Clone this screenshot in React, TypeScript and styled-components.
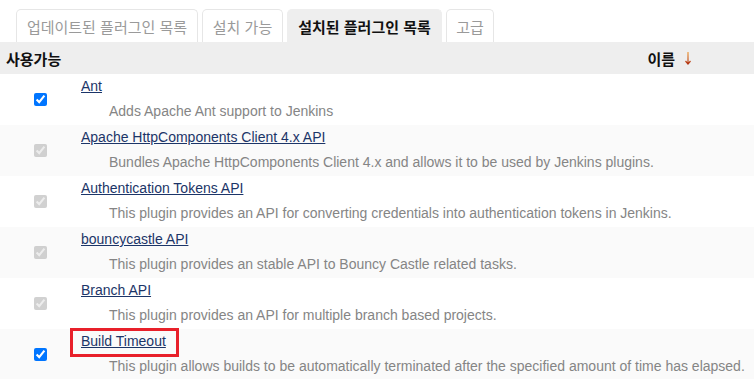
import React from 'react'
import styled, { createGlobalStyle } from 'styled-components'

const GlobalStyle = createGlobalStyle`
    body {
        margin: 0;
        background: #fff;
        font-family: "Liberation Sans", "Noto Sans CJK KR", Arial, sans-serif;
        font-size: 14px;
        color: #333;
    }
`

interface TabProps {
    $active?: boolean;
    $width: number;
}
interface RowProps {
    $striped: boolean;
}

const Page = styled.div`
    width: 754px;
    height: 379px;
    overflow: hidden;
`
const TabBar = styled.div`
    display: flex;
    gap: 4px;
    padding: 9px 0 0 16px;
`
const Tab = styled.div<TabProps>`
    width: ${p => p.$width}px;
    height: 33px;
    box-sizing: border-box;
    display: flex;
    align-items: center;
    justify-content: center;
    border: 1px solid ${p => (p.$active ? '#eeeeee' : '#e6e6e6')};
    border-bottom: none;
    border-radius: 5px 5px 0 0;
    background: ${p => (p.$active ? '#eeeeee' : '#fff')};
    color: ${p => (p.$active ? '#111' : '#9a9a9a')};
    font-weight: ${p => (p.$active ? 700 : 400)};
    font-size: 15px;
    padding-top: 1px;
`
const Table = styled.div`
    display: flex;
    flex-direction: column;
`
const HeaderRow = styled.div`
    display: grid;
    grid-template-columns: 79px 1fr;
    height: 32px;
    align-items: center;
    background: #eeeeee;
    font-weight: 700;
    font-size: 15px;
    color: #111;
`
const HeaderCell = styled.div`
    padding-left: 6px;
`
const NameHeader = styled.div`
    display: flex;
    justify-content: flex-end;
    align-items: center;
    gap: 9px;
    padding-right: 62px;
`
const PluginRow = styled.div<RowProps>`
    display: grid;
    grid-template-columns: 79px 1fr;
    height: 51px;
    box-sizing: border-box;
    background: ${p => (p.$striped ? '#fafafa' : '#fff')};
`
const CheckCell = styled.div`
    display: flex;
    align-items: center;
    justify-content: center;
    padding-left: 1px;
`
const Check = styled.input`
    width: 13px;
    height: 13px;
    margin: 0;
`
const NameCell = styled.div`
    padding: 4px 0 0 2px;
    display: flex;
    flex-direction: column;
`
const LinkWrap = styled.span<{ $highlight?: boolean }>`
    position: relative;
    align-self: flex-start;
    line-height: 16px;
    ${p => p.$highlight && `
        &::after {
            content: '';
            position: absolute;
            left: -11px;
            top: -5px;
            right: -13px;
            bottom: -8px;
            border: 3px solid #e8202a;
        }
    `}
`
const PluginLink = styled.a`
    color: #1c3568;
    text-decoration: underline;
`
const Description = styled.div`
    margin-top: 9px;
    padding-left: 28px;
    line-height: 16px;
    color: #858585;
    white-space: nowrap;
`

const SortArrow = () => (
    <svg width="8" height="16" viewBox="0 0 8 16">
        <defs>
            <linearGradient id="arr" x1="0" y1="0" x2="0" y2="1">
                <stop offset="0" stopColor="#f0a040" />
                <stop offset="1" stopColor="#b03010" />
            </linearGradient>
        </defs>
        <path d="M4 2 V14 M1.5 11 L4 14 L6.5 11" stroke="url(#arr)" strokeWidth="1.2" fill="none" />
    </svg>
)

const tabs = [
    { label: '업데이트된 플러그인 목록', width: 182 },
    { label: '설치 가능', width: 81 },
    { label: '설치된 플러그인 목록', width: 155, active: true },
    { label: '고급', width: 48 },
]

const plugins = [
    { name: 'Ant', desc: 'Adds Apache Ant support to Jenkins', enabled: true },
    { name: 'Apache HttpComponents Client 4.x API', desc: 'Bundles Apache HttpComponents Client 4.x and allows it to be used by Jenkins plugins.', enabled: false },
    { name: 'Authentication Tokens API', desc: 'This plugin provides an API for converting credentials into authentication tokens in Jenkins.', enabled: false },
    { name: 'bouncycastle API', desc: 'This plugin provides an stable API to Bouncy Castle related tasks.', enabled: false },
    { name: 'Branch API', desc: 'This plugin provides an API for multiple branch based projects.', enabled: false },
    { name: 'Build Timeout', desc: 'This plugin allows builds to be automatically terminated after the specified amount of time has elapsed.', enabled: true, highlight: true },
]

const App = () => {
    return (
        <Page>
            <GlobalStyle />
            <TabBar>
                {tabs.map(t => (
                    <Tab key={t.label} $width={t.width} $active={t.active}>{t.label}</Tab>
                ))}
            </TabBar>
            <Table>
                <HeaderRow>
                    <HeaderCell>사용가능</HeaderCell>
                    <NameHeader>
                        <span>이름</span>
                        <SortArrow />
                    </NameHeader>
                </HeaderRow>
                {plugins.map((p, i) => (
                    <PluginRow key={p.name} $striped={i % 2 === 1}>
                        <CheckCell>
                            <Check type="checkbox" checked readOnly disabled={!p.enabled} />
                        </CheckCell>
                        <NameCell>
                            <LinkWrap $highlight={p.highlight}>
                                <PluginLink href="#">{p.name}</PluginLink>
                            </LinkWrap>
                            <Description>{p.desc}</Description>
                        </NameCell>
                    </PluginRow>
                ))}
            </Table>
        </Page>
    )
}

export default App
